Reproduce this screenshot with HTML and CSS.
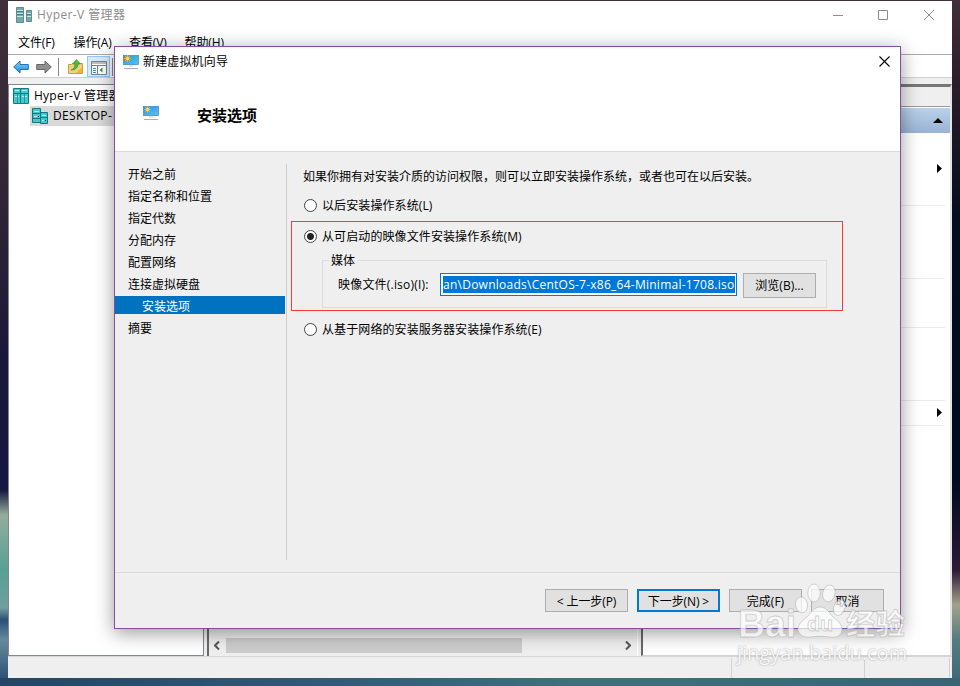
FILE: index.html
```html
<!DOCTYPE html>
<html lang="zh-CN">
<head>
<meta charset="utf-8">
<title>Hyper-V 管理器</title>
<link rel="stylesheet" href="styles.css">
</head>
<body>
<svg class="defs" width="0" height="0">
  <defs>
    <linearGradient id="screen" x1="0" y1="0" x2="1" y2="1"><stop offset="0" stop-color="#2b93dc"/><stop offset="1" stop-color="#55c4f8"/></linearGradient>
    <linearGradient id="blue" x1="0" y1="0" x2="0" y2="1"><stop offset="0" stop-color="#8bd4fb"/><stop offset="1" stop-color="#1489dc"/></linearGradient>
    <symbol id="pc" viewBox="0 0 16 16">
      <rect x=".5" y="1.500" width="15" height="9" fill="url(#screen)" stroke="#3487b8" stroke-width=".7"/>
      <path d="M6 11h4v2H6z" fill="#dfe6eb"/><path d="M1 14.500h14" stroke="#a3b0bc"/>
      <path d="M4.500 1v7M1 4.500h7M2 2l5 5M7 2l-5 5" stroke="#f7a51b" stroke-width="1"/><circle cx="4.500" cy="4.500" r="1.900" fill="#ffd34a"/>
    </symbol>
    <symbol id="server" viewBox="0 0 16 16">
      <path d="M.5.500h8v14h-8zM8.500 4.500h7v11h-7z" fill="#42c9ce" stroke="#17777e"/>
      <path d="M2 3.500h5M2 8.500h3M10 7.500h4M10 12.500h2" stroke="#a5f0f0"/>
      <path d="M1 5.500h7M1 10.500h7M9 9.500h6" stroke="#17777e"/><path d="M6 8.500h1M13 12.500h1" stroke="#063f48"/>
    </symbol>
    <symbol id="servers" viewBox="0 0 16 16">
      <path d="M.5.500h7v15h-7zM7.500.500h8v15h-8z" fill="#42c9ce" stroke="#17777e"/>
      <path d="M2 2.500h4M9 2.500h5M2 8.500h4M9 8.500h5" stroke="#a5f0f0"/>
      <path d="M1 5.500h14" stroke="#17777e"/><path d="M4.500 6v9M11.500 6v9" stroke="#2a979c"/>
    </symbol>
  </defs>
</svg>
<div class="window">
  <header class="titlebar">
    <svg class="app-icon" viewBox="0 0 16 16"><path d="M.5.500h7v15h-7zM10.500 3.500h5v11h-5z" fill="#70abae" stroke="#658b90"/><path d="M1 3.500h6M1 6.500h6M1 9.500h6M11 6.500h4M11 9.500h4" stroke="#c7e7e7"/><path d="M1 4.500h6M1 7.500h6M11 7.500h4" stroke="#477f85"/></svg>
    <span class="app-title">Hyper-V 管理器</span>
    <svg class="controls" viewBox="0 0 101 12"><path d="M0 6.500h10M45.500 1.500h9v9h-9zM91 1l10 10M101 1l-10 10" fill="none" stroke="#8d8d8d"/></svg>
  </header>
  <nav class="menu"><span>文件(F)</span><span>操作(A)</span><span>查看(V)</span><span>帮助(H)</span></nav>
  <div class="toolbar">
    <svg class="arrow" viewBox="0 0 16 14"><path d="M.7 7L7 1v3.500h8.300v5H7V13z" fill="url(#blue)" stroke="#2475af"/></svg>
    <svg class="arrow" viewBox="0 0 16 14"><path d="M15.300 7L9 1v3.500H.7v5H9V13z" fill="#909090" stroke="#666"/></svg>
    <i class="divider"></i>
    <svg class="folder" viewBox="0 0 15 15"><path d="M.5 5.500h3l1-1h10v10H.5z" fill="#f1d17b" stroke="#c79f40"/><path d="M8 14h6V8z" fill="#e1b850"/><path d="M3 11c3-1 4-3 4-6H4.500L8.500.500l4 4.500H10c0 4-3 6-7 6z" fill="#4bbd34" stroke="#2b8c23" stroke-width=".6"/></svg>
    <span class="tool-active"><svg viewBox="0 0 16 14"><path d="M.5.500h15v13H.5z" fill="#fff" stroke="#77818b"/><path d="M1 2h14M1 4.500h14M6.500 5v8" stroke="#77818b"/><path d="M2 7.500h3M2 9.500h3M2 11.500h3" stroke="#4386c2"/><path d="M11.500 6.500v5l-3-2.500z" fill="#35a12d"/></svg></span>
    <i class="divider"></i>
  </div>
  <main class="panes">
    <section class="tree">
      <div class="root"><svg><use href="#servers"/></svg><span>Hyper-V 管理器</span></div>
      <div class="host"><svg><use href="#server"/></svg><span>DESKTOP-</span></div>
    </section>
    <section class="center">
      <div class="center-body"></div>
      <div class="scroll"><svg viewBox="0 0 6 9"><path d="M5 .5l-4 4 4 4" fill="none" stroke="#555" stroke-width="2"/></svg><i></i><svg viewBox="0 0 6 9"><path d="M1 .5l4 4-4 4" fill="none" stroke="#555" stroke-width="2"/></svg></div>
    </section>
    <section class="actions">
      <div class="actions-head"></div>
      <div class="actions-title"><svg viewBox="0 0 10 5"><path d="M0 5l5-5 5 5z"/></svg></div>
      <div class="action a1"><svg viewBox="0 0 5 9"><path d="M0 0l5 4.500L0 9z"/></svg></div>
      <div class="action a2"></div><div class="action a3"></div><div class="action a4"></div>
      <div class="action a5"><svg viewBox="0 0 5 9"><path d="M0 0l5 4.500L0 9z"/></svg></div>
    </section>
  </main>
  <footer class="status"><i></i><i></i><i></i></footer>
</div>

<div class="dialog">
  <header class="dialog-head">
    <div class="dialog-title"><svg class="pc"><use href="#pc"/></svg><span>新建虚拟机向导</span><svg class="close" viewBox="0 0 11 11"><path d="M.5.500l10 10M10.500.500l-10 10" stroke="#000" stroke-width="1.100"/></svg></div>
    <div class="heading"><svg class="pc"><use href="#pc"/></svg><h1>安装选项</h1></div>
  </header>
  <div class="dialog-body">
    <nav class="steps"><span>开始之前</span><span>指定名称和位置</span><span>指定代数</span><span>分配内存</span><span>配置网络</span><span>连接虚拟硬盘</span><span class="current">安装选项</span><span>摘要</span></nav>
    <section class="options">
      <p class="intro">如果你拥有对安装介质的访问权限，则可以立即安装操作系统，或者也可在以后安装。</p>
      <div class="radio later"><i></i><span>以后安装操作系统(L)</span></div>
      <div class="marked">
        <div class="radio"><i class="on"></i><span>从可启动的映像文件安装操作系统(M)</span></div>
        <div class="media"><span class="legend">媒体</span>
          <div class="file-row"><span class="file-label">映像文件(.iso)(I):</span><div class="field"><span>an\Downloads\CentOS-7-x86_64-Minimal-1708.iso</span></div><div class="button browse">浏览(B)...</div></div>
        </div>
      </div>
      <div class="radio network"><i></i><span>从基于网络的安装服务器安装操作系统(E)</span></div>
    </section>
  </div>
  <footer class="dialog-foot"><div class="button wide">&lt; 上一步(P)</div><div class="button wide default">下一步(N) &gt;</div><div class="button">完成(F)</div><div class="button">取消</div></footer>
</div>

<svg class="watermark" viewBox="0 0 180 90">
  <g class="mark">
    <text x="4" y="73" font-size="38" textLength="58" lengthAdjust="spacingAndGlyphs" class="bold">Bai</text>
    <ellipse cx="67.500" cy="41" rx="6" ry="8" transform="rotate(-10 67 41)"/>
    <ellipse cx="80" cy="29" rx="6.200" ry="9"/>
    <ellipse cx="95" cy="29.500" rx="6.200" ry="8.500" transform="rotate(12 95 29)"/>
    <ellipse cx="105.500" cy="43.500" rx="5.500" ry="8" transform="rotate(22 105 43)"/>
    <path d="M86 43c6 0 9 5 12 9 4 4 10 7 10 13 0 7-6 9-12 8-7-1-13-1-20 0-7 1-12-3-12-8 0-6 6-9 10-13 4-5 7-9 12-9z"/>
    <text x="73" y="67" font-size="21" textLength="26" lengthAdjust="spacingAndGlyphs" class="bold du">du</text>
    <text x="112" y="71" font-size="29" textLength="59" lengthAdjust="spacingAndGlyphs" class="bold cjk">经验</text>
  </g>
</svg>
<div class="wm-url">jingyan.baidu.com</div>
</body>
</html>
```
FILE: styles.css
```css
* { box-sizing: border-box; }
body {
  position: relative;
  margin: 0;
  width: 960px;
  height: 686px;
  padding: 1px 8px 8px;
  overflow: hidden;
  font: 12px/18px "Open Sans", "Noto Sans CJK SC", sans-serif;
  color: #000;
  white-space: nowrap;
  background:
    linear-gradient(90deg, #244565, #315b78 35%, #41707a 60%, #386475) 0 678px / 100% 8px no-repeat,
    linear-gradient(#40303a, #2b1d2a 80px, #030d1e 220px, #020b1d 480px, #2c1937 570px, #a2a28a 605px, #547b80 640px, #3d6878) 952px 0 / 8px 100% no-repeat,
    linear-gradient(#40303c, #322735 180px, #1b1739 360px, #151941 490px, #94ad9b 515px, #57a095 570px, #719e9c 608px, #295077 620px, #648b9b 640px, #244870) 0 0 / 8px 100% no-repeat,
    #40303a;
}
svg { display: block; flex: none; }
.defs { position: absolute; }

.window { width: 944px; height: 677px; background: #fff; display: flex; flex-direction: column; }
.titlebar { height: 29px; display: flex; align-items: center; padding: 0 18px 1px 8px; color: #8c8c8c; }
.app-icon { width: 16px; height: 16px; }
.app-title { margin-left: 5px; letter-spacing: .4px; }
.controls { width: 101px; height: 12px; margin-left: auto; }
.menu { height: 25px; padding: 4px 10px 0; display: flex; gap: 16px; border-bottom: 1px solid #aaa; }
.menu span { flex: none; width: 39.5px; letter-spacing: -.1px; }
.toolbar { height: 23px; flex: none; display: flex; align-items: center; padding: 1px 0 0 5px; border-bottom: 1px solid #d0d0d0; }
.menu, .titlebar, .status { flex: none; }
.arrow { width: 16px; height: 14px; margin-right: 7px; }
.divider { width: 1px; height: 18px; background: #888; margin-right: 9px; }
.arrow + .divider { margin-left: -1px; }
.folder { width: 15px; height: 15px; margin-right: 4px; }
.tool-active { width: 23px; height: 21px; padding: 4px 3px 0; margin-right: 2px; border: 1px solid #90c8f6; background: #d8eafa; }
.tool-active svg { width: 16px; height: 14px; }
.panes { flex: 1; display: flex; padding-top: 6px; background: #efefef; min-height: 0; }
.tree { width: 196px; background: #fff; border: 1px solid #828790; padding: 1px 0 0 4px; }
.root, .host { height: 20px; display: flex; align-items: center; gap: 5px; }
.root { letter-spacing: .25px; }
.tree svg { width: 16px; height: 16px; }
.host { margin-left: 17px; padding-left: 2px; width: 110px; background: #d9d9d9; letter-spacing: .35px; }
.center { width: 431px; margin-left: 3px; border-left: 2px solid #696969; border-right: 1px solid #fff; display: flex; flex-direction: column; }
.center-body { flex: 1; }
.scroll { height: 15px; margin-bottom: 3px; display: flex; align-items: center; padding: 0 6px 0 5px; }
.scroll svg { width: 6px; height: 9px; }
.scroll i { width: 296px; height: 15px; background: #cdcdcd; margin: 0 auto 0 6px; }
.actions { flex: 1; margin-left: 3px; border-top: 3px solid #777; border-left: 2px solid #696969; border-right: 2px solid #e3e3e3; border-bottom: 1px solid #d4d4d4; background: #fff; }
.actions-head { height: 20px; background: #efefef; border-bottom: 1px solid #999; }
.actions-title { height: 25px; margin-top: 1px; padding: 10px 7px 0; background: linear-gradient(#bad1ea, #98b3d2); }
.actions svg { margin-left: auto; }
.actions-title svg { width: 10px; height: 5px; }
.action { margin-right: 5px; border-bottom: 1px solid #ebebeb; padding-right: 3px; }
.action svg { width: 5px; height: 9px; }
.a1 { height: 73px; padding-top: 31px; }
.a2 { height: 73px; }
.a3 { height: 49px; }
.a4 { height: 73px; }
.a5 { height: 25px; padding-top: 7px; }
.status { height: 22px; display: flex; background: #efefef; border-top: 1px solid #d5d5d5; padding-top: 1px; }
.status i { width: 133px; border-right: 1px solid #d2d2d2; }
.status i:first-child { width: 724px; }
.status i:last-child { width: 85px; }

.dialog {
  position: absolute; left: 114px; top: 46px; width: 787px; height: 583px;
  border: 1px solid #8150a1; background: #efefef; display: flex; flex-direction: column;
  box-shadow: 0 4px 18px rgba(0, 0, 0, .4);
}
.dialog-head { height: 105px; flex: none; background: #fff; border-bottom: 1px solid #dadada; }
.dialog-title { height: 29px; display: flex; align-items: center; padding: 0 10px 0 8px; }
.dialog-title .pc { width: 16px; height: 16px; }
.dialog-title span { margin-left: 4px; letter-spacing: .15px; }
.close { width: 11px; height: 11px; margin-left: auto; }
.heading { height: 78px; display: flex; align-items: center; padding: 0 0 0 28px; }
.heading .pc { width: 16px; height: 16px; margin-bottom: 4px; }
.heading h1 { margin: 0 0 0 38px; font-size: 15px; line-height: 20px; font-weight: 700; }
.dialog-body { flex: 1; display: flex; padding: 12px 0; }
.steps { width: 172px; border-right: 1px solid #ccc; display: flex; flex-direction: column; gap: 4px; padding-right: 1px; }
.steps span { height: 18px; padding-left: 13px; line-height: 22px; }
.steps .current { background: #0072bf; color: #fff; padding-left: 27px; }
.options { flex: 1; padding-left: 4px; }
.intro { margin: 3px 0 0 12px; line-height: 20px; }
.radio { display: flex; align-items: center; height: 20px; }
.radio span { padding-top: 2px; letter-spacing: .1px; }
.marked .radio span { padding-top: 1px; }
.radio i { width: 13px; height: 13px; margin-right: 5px; border: 1px solid #444; border-radius: 50%; background: #fff; }
.radio i.on { background: radial-gradient(circle, #222 3px, #fff 4px); }
.later { margin: 8px 0 0 13px; }
.marked { width: 552px; height: 90px; margin-top: 6px; border: 1px solid #f83b38; padding: 4px 0 0 12px; }
.media { position: relative; width: 505px; height: 48px; margin: 14px 0 0 18px; border: 1px solid #dcdcdc; padding: 12px 0 0 15px; }
.legend { position: absolute; left: 6px; top: -9px; padding: 0 3px 0 2px; background: #efefef; }
.file-row { display: flex; align-items: flex-start; }
.file-label { width: 102px; padding-top: 3px; letter-spacing: .2px; }
.field { width: 297px; height: 23px; border: 1px solid #0078d7; background: #fff; padding: 2px 1px 2px 2px; margin-right: 6px; display: flex; }
.field span { width: 100%; line-height: 17px; height: 17px; background: #0078d7; color: #fff; overflow: hidden; letter-spacing: .25px; }
.button { width: 73px; height: 23px; border: 1px solid #adadad; background: #e1e1e1; text-align: center; line-height: 23px; }
.browse { height: 25px; line-height: 24px; }
.network { margin: 8px 0 0 13px; }
.dialog-foot { height: 56px; display: flex; justify-content: flex-end; gap: 9px; padding: 16px 16px 0 0; border-top: 1px solid #dadada; }
.wide { width: 83px; letter-spacing: -.1px; }
.default { border: 2px solid #0078d7; line-height: 21px; }

.watermark { position: absolute; left: 734px; top: 564px; width: 180px; height: 90px; }
.mark { fill: #fff; fill-opacity: .7; stroke: #aaa; stroke-opacity: .55; stroke-width: .9; }
.bold { font-family: "Liberation Sans", sans-serif; font-weight: 700; }
.cjk { font-family: "Noto Sans CJK SC", sans-serif; }
.wm-url { position: absolute; left: 737px; top: 640px; font: 20px/26px "Open Sans", sans-serif; color: rgba(255, 255, 255, .9); text-shadow: 0 0 2px #999; }
```
